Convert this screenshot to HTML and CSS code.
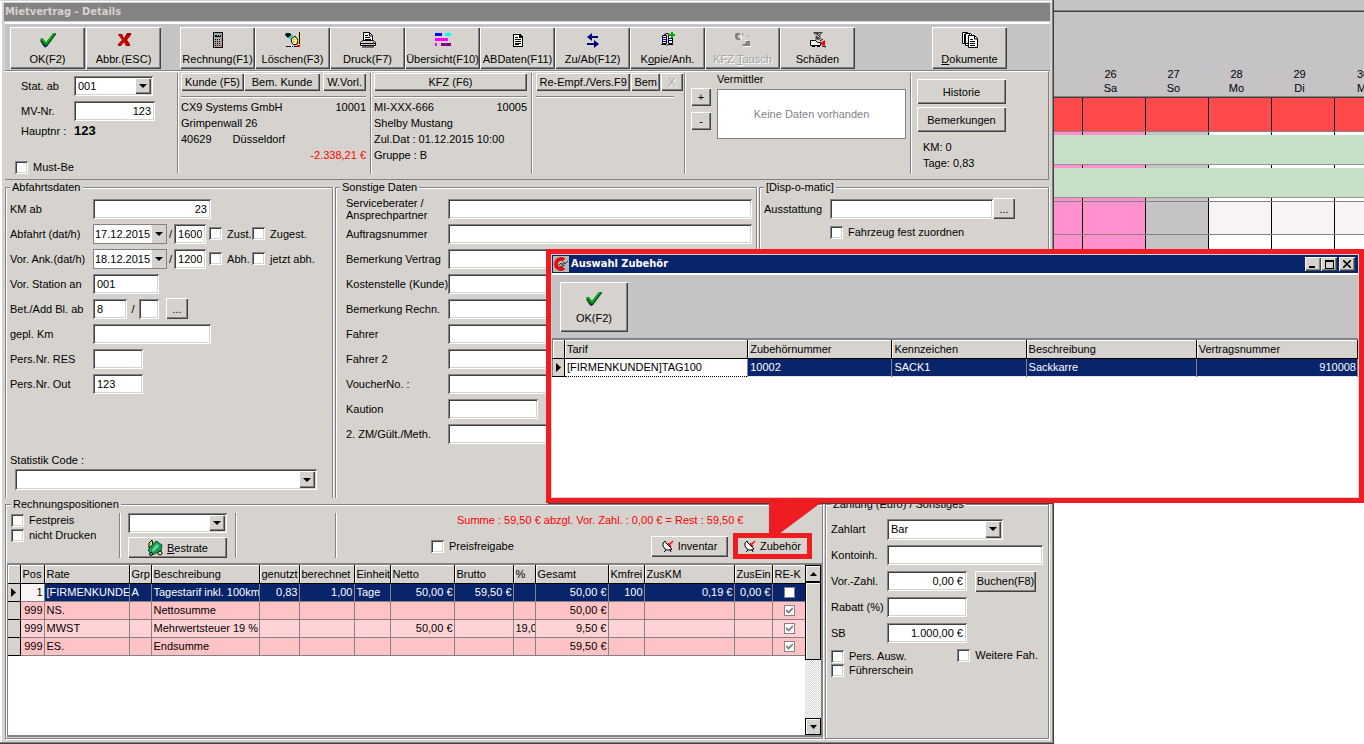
FILE: index.html
```html
<!DOCTYPE html>
<html lang="de">
<head>
<meta charset="utf-8">
<title>Mietvertrag - Details</title>
<link rel="stylesheet" href="styles.css">
</head>
<body>
<svg class="defs" aria-hidden="true">
  <symbol id="i-check" viewBox="0 0 16 15"><path d="M0 8l3-1 3 3 7-9h3v1L7 14l-2 1-2-2z" fill="#00186b"/><path d="M0 6h3l3 4 7-9h3L7 13H5L3 11z" fill="#008a00"/><path d="M2 7l4 4 8-10" fill="none" stroke="#10c310"/></symbol>
  <symbol id="i-arrow" viewBox="0 0 5 9"><path d="M0 0l5 4.500-5 4.500z"/></symbol>
  <symbol id="i-plug" viewBox="0 0 12 12"><path d="M3 1L1 3v3l2 3 2 1h3l2-1-6-6z" fill="#fff" stroke="#000"/><path d="M4 10l-2 2M8 9l1 3" fill="none" stroke="#000"/><path d="M11 1L7 5M6 3l3 4" fill="none" stroke="red" stroke-width="1.300"/></symbol>
</svg>
<div class="desktop">
<main class="window">
  <h1 class="titlebar">Mietvertrag - Details</h1>

  <div class="toolbar">
    <div class="tools">
      <button class="tool"><svg width="16" height="16"><use href="#i-check"/></svg><span>OK(F2)</span></button>
      <button class="tool"><svg width="16" height="16" viewBox="0 0 16 16"><path d="M2 2h4l2 4 3-5h4v2l-4 5 3 4v2h-4l-2-4-3 4H2v-2l4-4-3-4z" fill="#a00000"/><path d="M4 3l7 10M13 3L4 13" fill="none" stroke="#d00" stroke-width="1.500"/></svg><span>Abbr.(ESC)</span></button>
    </div>
    <div class="tools">
      <button class="tool"><svg width="16" height="16" viewBox="0 0 16 16" shape-rendering="crispEdges"><path d="M3 0h10v16H3z"/><path d="M4 1h8v14H4z" fill="#a5a2a5"/><path d="M5 3h6v2H5z" fill="#000"/><path d="M7 3h1v1H7zM9 3h1v1H9z" fill="#0ff"/><path d="M5 7h1v1H5zM7 7h1v1H7zM9 7h1v1H9zM5 9h1v1H5zM7 9h1v1H7zM9 9h1v1H9zM5 11h1v1H5zM7 11h1v1H7zM9 11h1v1H9zM5 13h1v1H5zM7 13h1v1H7z"/><path d="M9 13h2v1H9z" fill="red"/></svg><span>Rechnung(F1)</span></button>
      <button class="tool"><svg width="16" height="16" viewBox="0 0 16 16"><path d="M1 1h4l2 3-4 2-3-3z"/><path d="M4 5l3-3 1 2-4 3-2-1z" fill="#0dd"/><path d="M6 7l4-3 3 4-1 4-3 1-2-2z" fill="#fff7a0" stroke="#000"/><path d="M8 7l2 1M8 9l2 1" stroke="#c90"/><path d="M13 1h1v11h-1z" fill="#fd0"/><path d="M14.500 0v12M1 14.500h5M9 14.500h3M7 14.500h1" stroke="#000"/><path d="M12 13h3v2h-3z" fill="red"/></svg><span>Löschen(F3)</span></button>
      <button class="tool"><svg width="16" height="16" viewBox="0 0 16 16"><path d="M3.500 9V.5h6l3 3V9" fill="#fff" stroke="#000"/><path d="M5 3.500h3M5 5.500h5M9.500 1v3h3M5 7.500h6" stroke="#000" fill="none"/><path d="M2.500 8.500h11l2 2v3H.5v-3z" fill="#d6d3ce" stroke="#000"/><path d="M1 11.500h14M2 15h12" stroke="#000"/><path d="M13 10h1v1h-1z" fill="red"/></svg><span>Druck(F7)</span></button>
      <button class="tool"><svg width="16" height="16" viewBox="0 0 16 16" shape-rendering="crispEdges"><path d="M0 1h7v3H0z" fill="#00f"/><path d="M10 1h6v3h-6z" fill="#0ff"/><path d="M0 6h13v3H0zM0 11h2v3H0z" fill="#f0f"/><path d="M6 11h10v3H6z" fill="#808"/></svg><span>Übersicht(F10)</span></button>
      <button class="tool"><svg width="16" height="16" viewBox="0 0 16 16" shape-rendering="crispEdges"><path d="M3 2h7l3 3v10H3z"/><path d="M4 3h5v3h3v8H4z" fill="#fff"/><path d="M5 5h3v1H5zM5 7h6v1H5zM5 9h6v1H5zM5 11h6v1H5zM5 13h4v-1H5z"/></svg><span>ABDaten(F11)</span></button>
      <button class="tool"><svg width="16" height="16" viewBox="0 0 16 16"><path d="M2 5l5-4v3h6v2H7v3zM14 12l-5-4v3H2v2h7v3z" fill="#000084"/></svg><span>Zu/Ab(F12)</span></button>
      <button class="tool"><svg width="16" height="16" viewBox="0 0 16 16"><path d="M2.500 3.500h4v8h-4zM8.500 3.500h4v8h-4z" fill="#ffd" stroke="#000"/><path d="M3 5.500h3M3 7.500h3M3 9.500h3M9 6.500h3M9 8.500h3" stroke="#00a"/><path d="M4 2.500l3-1 3 1M1 12.500h5l1 1 1-1h5" stroke="#000" fill="none"/><path d="M11 0h2v2h2v2h-2v2h-2V4H9V2h2z" fill="#0a0"/></svg><span>K<u>o</u>pie/Anh.</span></button>
      <button class="tool" disabled><svg width="18" height="16" viewBox="0 0 18 16"><path d="M2 1h4v2H4v3h2v2H3L1 6V2zM8 12h3l1-3h4v5H9zM8 1h1v2H8zM14 4h1v1h-1z" fill="#848284"/><path d="M7 3v3h2M9 14.500h8M11 8.500h2M16.500 5v1" stroke="#fff" fill="none"/></svg><span>KFZ <u>T</u>ausch</span></button>
      <button class="tool"><svg width="18" height="16" viewBox="0 0 18 16"><path d="M4 0h10l-3 3 1 4-3 1-3-1 1-3z" fill="#424142"/><path d="M6 2l5 4M11 1L8 4" stroke="#ccc"/><path d="M1.500 8.500h5l2 2h3v3h-10z" fill="#fff" stroke="#000"/><path d="M3 14h3M8 14h3" stroke="#000" stroke-width="2"/><path d="M11 11l5-3v6l-3-1z" fill="red"/><path d="M11 9l3-2M13 14l4 1" stroke="#000"/></svg><span>Schäden</span></button>
    </div>
    <div class="tools">
      <button class="tool"><svg width="18" height="16" viewBox="0 0 18 16"><path d="M1.500 11.500V.5h5l2 2v9zM4.500 13.500v-12h5l2 2v10z" fill="#fff" stroke="#000"/><path d="M7.500 3.500h6l3 3v9h-9z" fill="#fff" stroke="#000"/><path d="M13.500 4v3h3M9 7.500h3M9 9.500h5M9 11.500h5M9 13.500h5M3.500 2v10" stroke="#000" fill="none"/></svg><span><u>D</u>okumente</span></button>
    </div>
  </div>

  <section class="head">
    <div class="head-col base">
      <div class="line"><label for="stat">Stat. ab</label><span class="combo w-station"><select id="stat"><option>001</option></select></span></div>
      <div class="line"><label for="mv">MV-Nr.</label><input class="field w-mv num" id="mv" value="123"></div>
      <div class="line short"><span class="key">Hauptnr :</span><b>123</b></div>
      <label class="check must"><input type="checkbox">Must-Be</label>
    </div>
    <div class="head-col kunde">
      <div class="btns"><div class="pair"><button class="btn">Kunde (F5)</button><button class="btn wide">Bem. Kunde</button></div><button class="btn">W.Vorl.</button></div>
      <hr>
      <p class="split"><span>CX9 Systems GmbH</span><span>10001</span></p>
      <p>Grimpenwall 26</p>
      <p class="town"><span>40629</span><span>Düsseldorf</span></p>
      <p class="amount">-2.338,21 €</p>
    </div>
    <div class="head-col kfz">
      <div class="btns"><button class="btn full">KFZ (F6)</button></div>
      <hr>
      <p class="split"><span>MI-XXX-666</span><span>10005</span></p>
      <p>Shelby Mustang</p>
      <p>Zul.Dat : 01.12.2015 10:00</p>
      <p>Gruppe : B</p>
    </div>
    <div class="head-col empf">
      <div class="btns tight"><button class="btn grow">Re-Empf./Vers.F9</button><button class="btn">Bem</button><button class="btn x" disabled>X</button></div>
      <hr>
    </div>
    <div class="head-col agent">
      <div class="plusminus"><button class="btn">+</button><button class="btn">-</button></div>
      <div class="agent-list"><span>Vermittler</span><div class="empty">Keine Daten vorhanden</div></div>
    </div>
    <div class="head-col extra">
      <button class="btn">Historie</button>
      <button class="btn">Bemerkungen</button>
      <div class="facts"><p>KM: 0</p><p>Tage: 0,83</p></div>
    </div>
  </section>

  <div class="groups upper">
    <fieldset class="group depart">
      <legend>Abfahrtsdaten</legend>
      <div class="row"><label for="km">KM ab</label><input class="field w-118 num" id="km" value="23"></div>
      <div class="row"><label for="ab">Abfahrt (dat/h)</label><span class="combo flat"><select id="ab"><option>17.12.2015</option></select></span>/<input class="field w-time" aria-label="Abfahrt Uhrzeit" value="1600"><label class="check c1"><input type="checkbox">Zust.</label><label class="check"><input type="checkbox">Zugest.</label></div>
      <div class="row"><label for="an">Vor. Ank.(dat/h)</label><span class="combo flat"><select id="an"><option>18.12.2015</option></select></span>/<input class="field w-time" aria-label="Ankunft Uhrzeit" value="1200"><label class="check c1"><input type="checkbox">Abh.</label><label class="check"><input type="checkbox">jetzt abh.</label></div>
      <div class="row"><label for="st">Vor. Station an</label><input class="field w-66" id="st" value="001"></div>
      <div class="row"><label for="bl">Bet./Add Bl. ab</label><input class="field w-34" id="bl" value="8"><span class="slash">/</span><input class="field w-20" aria-label="Add Bl."><button class="btn dots gap">...</button></div>
      <div class="row"><label for="gk">gepl. Km</label><input class="field w-118" id="gk"></div>
      <div class="row"><label for="pr">Pers.Nr. RES</label><input class="field w-50" id="pr"></div>
      <div class="row"><label for="po">Pers.Nr. Out</label><input class="field w-50" id="po" value="123"></div>
      <div class="stat"><label for="sc">Statistik Code :</label><span class="combo"><select id="sc"><option></option></select></span></div>
    </fieldset>
    <fieldset class="group other">
      <legend>Sonstige Daten</legend>
      <div class="row"><label class="two" for="o1">Serviceberater / Ansprechpartner</label><input class="field grow" id="o1"></div>
      <div class="row"><label for="o2">Auftragsnummer</label><input class="field grow" id="o2"></div>
      <div class="row"><label for="o3">Bemerkung Vertrag</label><input class="field grow" id="o3"></div>
      <div class="row"><label for="o4">Kostenstelle (Kunde)</label><input class="field grow" id="o4"></div>
      <div class="row"><label for="o5">Bemerkung Rechn.</label><input class="field grow" id="o5"></div>
      <div class="row"><label for="o6">Fahrer</label><input class="field grow" id="o6"></div>
      <div class="row"><label for="o7">Fahrer 2</label><input class="field grow" id="o7"></div>
      <div class="row"><label for="o8">VoucherNo. :</label><input class="field grow" id="o8"></div>
      <div class="row"><label for="o9">Kaution</label><input class="field w-90" id="o9"></div>
      <div class="row"><label for="o10">2. ZM/Gült./Meth.</label><input class="field grow" id="o10"></div>
    </fieldset>
    <fieldset class="group dispo">
      <legend>[Disp-o-matic]</legend>
      <div class="row"><label for="eq">Ausstattung</label><input class="field w-equip" id="eq"><button class="btn dots">...</button></div>
      <label class="check fixed"><input type="checkbox">Fahrzeug fest zuordnen</label>
    </fieldset>
  </div>

  <div class="groups lower">
    <fieldset class="group positions">
      <legend>Rechnungspositionen</legend>
      <div class="posbar">
        <div class="cell checks"><label class="check"><input type="checkbox">Festpreis</label><label class="check"><input type="checkbox">nicht Drucken</label></div>
        <div class="cell rates"><span class="combo"><select aria-label="Rate"><option></option></select></span>
          <button class="btn best"><svg width="16" height="16" viewBox="0 0 16 16"><path d="M2 3l3-3 1 5-4 3z" fill="#dd4" stroke="#000"/><path d="M1 10l8-9 6 4-1 6-9 4z" fill="#18a058" stroke="#053"/><path d="M5 10l5-6 2 2-6 6z" fill="#6d9"/><circle cx="13" cy="13" r="2" fill="#ee8" stroke="#000"/><circle cx="4" cy="14" r="1.500" fill="#aaa" stroke="#000"/></svg><span><u>B</u>estrate</span></button></div>
        <div class="cell blank"></div>
        <div class="cell sum">
          <p class="total">Summe : 59,50 € abzgl. Vor. Zahl. : 0,00 € = Rest : 59,50 €</p>
          <div class="actions"><label class="check"><input type="checkbox">Preisfreigabe</label>
            <button class="btn inv"><svg width="12" height="12"><use href="#i-plug"/></svg>Inventar</button>
            <span class="marked"><button class="btn"><svg width="12" height="12"><use href="#i-plug"/></svg>Zubehör</button></span></div>
        </div>
      </div>
      <div class="gridbox">
        <div class="gridarea">
        <table class="grid pos">
          <colgroup><col class="k-ind"><col class="k-pos"><col class="k-rate"><col class="k-grp"><col class="k-desc"><col class="k-used"><col class="k-calc"><col class="k-unit"><col class="k-net"><col class="k-gross"><col class="k-grp"><col class="k-total"><col class="k-unit"><col class="k-km"><col class="k-ein"><col class="k-re"></colgroup>
          <thead><tr><th></th><th>Pos</th><th>Rate</th><th>Grp</th><th>Beschreibung</th><th>genutzt</th><th>berechnet</th><th>Einheit</th><th>Netto</th><th>Brutto</th><th>%</th><th>Gesamt</th><th>Kmfrei</th><th>ZusKM</th><th>ZusEin</th><th>RE-K</th></tr></thead>
          <tbody>
          <tr class="sel"><th><svg width="5" height="9"><use href="#i-arrow"/></svg></th><td class="num cur">1</td><td>[FIRMENKUNDE</td><td>A</td><td>Tagestarif inkl. 100km</td><td class="num">0,83</td><td class="num">1,00</td><td>Tage</td><td class="num">50,00 €</td><td class="num">59,50 €</td><td></td><td class="num">50,00 €</td><td class="num">100</td><td class="num">0,19 €</td><td class="num">0,00 €</td><td class="mid"><input type="checkbox" aria-label="RE-K"></td></tr>
          <tr><th></th><td class="num">999</td><td>NS.</td><td></td><td>Nettosumme</td><td></td><td></td><td></td><td></td><td></td><td></td><td class="num">50,00 €</td><td></td><td></td><td></td><td class="mid"><input type="checkbox" aria-label="RE-K" checked disabled></td></tr>
          <tr class="alt"><th></th><td class="num">999</td><td>MWST</td><td></td><td>Mehrwertsteuer 19 %</td><td></td><td></td><td></td><td class="num">50,00 €</td><td></td><td>19,0</td><td class="num">9,50 €</td><td></td><td></td><td></td><td class="mid"><input type="checkbox" aria-label="RE-K" checked disabled></td></tr>
          <tr><th></th><td class="num">999</td><td>ES.</td><td></td><td>Endsumme</td><td></td><td></td><td></td><td></td><td></td><td></td><td class="num">59,50 €</td><td></td><td></td><td></td><td class="mid"><input type="checkbox" aria-label="RE-K" checked disabled></td></tr>
          </tbody>
        </table>
        </div>
        <div class="scroll"><button class="sb" aria-label="Nach oben"><svg width="7" height="4" viewBox="0 0 7 4"><path d="M0 4l3.500-4L7 4z"/></svg></button><div class="thumb"></div><button class="sb" aria-label="Nach unten"><svg width="7" height="4" viewBox="0 0 7 4"><path d="M0 0l3.500 4L7 0z"/></svg></button></div>
      </div>
    </fieldset>
    <fieldset class="group pay">
      <legend>Zahlung (Euro) / Sonstiges</legend>
      <div class="row"><label for="z1">Zahlart</label><span class="combo w-art"><select id="z1"><option>Bar</option></select></span></div>
      <div class="row"><label for="z2">Kontoinh.</label><input class="field grow" id="z2"></div>
      <div class="row"><label for="z3">Vor.-Zahl.</label><input class="field w-80 num" id="z3" value="0,00 €"><button class="btn book">Buchen(F8)</button></div>
      <div class="row"><label for="z4">Rabatt (%)</label><input class="field w-80" id="z4"></div>
      <div class="row"><label for="z5">SB</label><input class="field w-80 num" id="z5" value="1.000,00 €"></div>
      <div class="paychecks"><div><label class="check"><input type="checkbox">Pers. Ausw.</label><label class="check"><input type="checkbox">Führerschein</label></div><label class="check"><input type="checkbox">Weitere Fah.</label></div>
    </fieldset>
  </div>
</main>

<aside class="calendar">
  <div class="cal-top"></div>
  <div class="days">
    <div class="day"></div><div class="day">26<br>Sa</div><div class="day">27<br>So</div><div class="day">28<br>Mo</div><div class="day">29<br>Di</div><div class="day">30<br>Mi</div>
  </div>
  <div class="cal-row red"><i></i><i></i><i></i><i></i><i></i><i></i></div>
  <div class="cal-row thin"><i></i><i></i><i></i><i></i><i></i><i></i></div>
  <div class="bar"></div>
  <div class="cal-row thin"><i></i><i></i><i></i><i></i><i></i><i></i></div>
  <div class="bar"></div>
  <div class="cal-row thin"><i></i><i></i><i></i><i></i><i></i><i></i></div>
  <div class="cal-row shade"><i></i><i></i><i></i><i></i><i></i><i></i></div>
  <div class="cal-row"><i></i><i></i><i></i><i></i><i></i><i></i></div>
</aside>

<section class="dialog" aria-label="Auswahl Zubehör">
  <div class="dialog-in">
    <div class="dlg-title">
      <svg width="16" height="16" viewBox="0 0 16 16"><path d="M0 0h16v16H0z" fill="#b8b8b8"/><path d="M11 4A5 5 0 1 0 11 12" fill="none" stroke="#e01010" stroke-width="4"/><path d="M6 9l2-2 1 2 2-3 1 2 3-3M7 11l5-2" stroke="#333" fill="none"/></svg>
      <h2>Auswahl Zubehör</h2>
      <div class="winbtns">
        <button class="btn" aria-label="Minimieren"><svg width="8" height="8" viewBox="0 0 8 8"><path d="M0 6h6v2H0z"/></svg></button>
        <button class="btn" aria-label="Maximieren"><svg width="9" height="9" viewBox="0 0 9 9" shape-rendering="crispEdges"><path d="M0 0h9v9H0zM1 2v6h7V2z" fill-rule="evenodd"/></svg></button>
        <button class="btn close" aria-label="Schließen"><svg width="8" height="8" viewBox="0 0 8 8"><path d="M0 0l8 8M8 0L0 8" stroke="#000" stroke-width="1.600"/></svg></button>
      </div>
    </div>
    <div class="dlg-tools"><button class="tool big"><svg width="16" height="15"><use href="#i-check"/></svg><span>OK(F2)</span></button></div>
    <table class="grid acc">
      <colgroup><col class="k-ind"><col class="a-tarif"><col class="a-nr"><col class="a-kz"><col class="a-be"><col class="a-vn"></colgroup>
      <thead><tr><th></th><th>Tarif</th><th>Zubehörnummer</th><th>Kennzeichen</th><th>Beschreibung</th><th>Vertragsnummer</th></tr></thead>
      <tbody><tr class="sel"><th><svg width="5" height="9"><use href="#i-arrow"/></svg></th><td class="cur">[FIRMENKUNDEN]TAG100</td><td>10002</td><td>SACK1</td><td>Sackkarre</td><td class="num">910008</td></tr></tbody>
    </table>
  </div>
  <svg class="callout" width="53" height="32" viewBox="0 0 53 32"><path d="M0 0h53L10 32H0z" fill="#ef1c21"/></svg>
</section>
</div>
</body>
</html>
```

FILE: styles.css
```css
* { box-sizing: border-box; }
:root {
  --face: #d6d3ce;
  --tool: #c6c3c6;
  --mid: #848284;
  --dark: #424142;
  --navy: #08246b;
  --red: #ef1c21;
  --raised: inset 1px 1px #fff, inset -1px -1px var(--dark), inset -2px -2px var(--mid);
  --sunken: inset 1px 1px var(--mid), inset -1px -1px #fff, inset 2px 2px var(--dark), inset -2px -2px var(--face);
}
body { margin: 0; background: #fff; color: #000; font: 11px/14px "Liberation Sans", Arial, sans-serif; }
button, input, select { font: inherit; color: inherit; margin: 0; border: 0; border-radius: 0; padding: 0; }
p, h1, h2 { margin: 0; }
.defs { position: absolute; width: 0; height: 0; }
svg { flex: none; display: block; }
.desktop { position: relative; display: flex; align-items: flex-start; min-height: 100vh; overflow: hidden; }

/* main window */
.window {
  flex: 1; min-width: 0; min-height: calc(100vh - 1px); display: flex; flex-direction: column;
  padding: 3px 4px 4px; background: var(--face);
  box-shadow: inset -1px -1px var(--dark), inset -2px -2px var(--mid), inset 0 1px var(--face), inset 2px 2px #fff;
}
.titlebar { height: 18px; margin: 0 0 1px; padding-left: 1px; background: var(--mid); color: var(--face); font: bold 11px/18px "DejaVu Sans Condensed", "DejaVu Sans", sans-serif; }
.btn, .tool { background: var(--face); box-shadow: var(--raised); white-space: nowrap; }
.btn { display: inline-flex; align-items: center; justify-content: center; height: 19px; padding: 0 4px; }
.btn:disabled { color: #a5a2a5; text-shadow: 1px 1px #fff; }
.toolbar { display: flex; gap: 19px; height: 49px; padding: 3px 43px 0 5px; background: var(--tool); border-top: 2px solid #fff; border-bottom: 1px solid var(--mid); margin-left: 1px; }
.tools { display: flex; }
.tools:last-child { margin-left: auto; }
.tool { display: flex; flex-direction: column; align-items: center; gap: 4px; width: 75px; height: 42px; padding-top: 5px; }
.tool:disabled { color: #a5a2a5; text-shadow: 1px 1px #fff; }
.tools:first-child { gap: 1px; }

.field { height: 20px; min-width: 0; padding: 0 4px; background: #fff; box-shadow: var(--sunken); }
.num { text-align: right; }
.combo { position: relative; display: inline-flex; height: 21px; padding: 2px; background: #fff; box-shadow: var(--sunken); }
.combo select { appearance: none; flex: 1; min-width: 0; background: transparent; padding: 0 2px; }
.combo::after {
  content: ""; position: absolute; top: 2px; right: 2px; bottom: 2px; width: 16px; pointer-events: none;
  box-shadow: var(--raised);
  background: var(--face) url("data:image/svg+xml,%3Csvg xmlns='http://www.w3.org/2000/svg' width='8' height='4'%3E%3Cpath d='M0 0h8L4 4z'/%3E%3C/svg%3E") center no-repeat;
}
.combo.flat { width: 74px; height: 20px; padding: 1px; box-shadow: inset 0 0 0 1px var(--mid); }
.combo.flat select { padding: 0 1px; }
.combo.flat::after { box-shadow: none; width: 14px; top: 1px; right: 1px; bottom: 1px; }
.check { display: inline-flex; align-items: center; gap: 5px; white-space: nowrap; }
input[type="checkbox"] { appearance: none; flex: none; width: 13px; height: 13px; background: #fff; box-shadow: var(--sunken); }
.grow { flex: 1; }

/* header panel */
.head { display: flex; height: 109px; margin: 0 1px 0 1px; padding-top: 1px; border-top: 1px solid #fff; border-bottom: 1px solid var(--mid); border-right: 1px solid var(--mid); }
.head-col { padding: 0 4px; margin-bottom: 5px; }
.head-col + .head-col { border-left: 1px solid var(--mid); box-shadow: inset 1px 0 #fff; }
.head-col p { line-height: 16px; }
.head-col .btns .btn { height: 18px; }
.head hr { margin: 5px 0 1px; height: 2px; border: 0; border-top: 1px solid var(--mid); background: #fff; }
.base { width: 172px; padding-left: 10px; }
.line { display: flex; align-items: center; height: 25px; padding-left: 6px; }
.line label, .line .key { width: 53px; }
.line.short { height: 16px; }
.line b { font-size: 13px; }
.w-station { width: 79px; height: 20px; }
.w-mv { width: 81px; }
.must { margin-top: 21px; }
.kunde { width: 193px; padding-left: 3px; }
.btns { display: flex; justify-content: space-between; }
.btns.tight { gap: 1px; }
.btns.tight .btn { padding: 0 3px; }
.btns.tight .x { width: 22px; }
.pair { display: flex; }
.wide { width: 76px; }
.full { flex: 1; }
.split, .town { display: flex; justify-content: space-between; }
.town { justify-content: flex-start; gap: 21px; }
.amount { text-align: right; color: red; }
.kfz { width: 161px; padding-left: 3px; }
.empf { width: 153px; }
.empf .btns { margin-right: -3px; }
.empf hr { margin-right: 6px; }
.agent { flex: 1; display: flex; gap: 6px; padding: 0 4px 0 6px; }
.plusminus { display: flex; flex-direction: column; gap: 6px; padding-top: 15px; }
.plusminus .btn { width: 20px; height: 18px; }
.agent-list { flex: 1; margin-top: -1px; }
.empty { height: 50px; background: #fff; border: 1px solid var(--mid); color: var(--mid); display: flex; align-items: center; justify-content: center; margin-top: 3px; }
.extra { width: 138px; padding: 6px 42px 0 6px; display: flex; flex-direction: column; gap: 3px; }
.extra .btn { height: 25px; }
.facts { padding: 4px 0 0 6px; }

/* group boxes */
.groups { display: grid; gap: 2px; margin: 0 1px 0 1px; }
.upper { grid-template-columns: 328px 422px minmax(0, 1fr); margin-top: 1px; min-height: 317px; }
.group { min-width: 0; margin: 0; padding: 3px 4px 0; border: 1px solid var(--mid); box-shadow: inset 1px 1px #fff, 1px 0 #fff; }
.upper .group { border-bottom: 0; }
legend { padding: 0 2px; background: var(--face); line-height: 12px; }
.row { display: flex; align-items: center; height: 25px; }
.row > label:first-child { flex: none; width: 83px; white-space: nowrap; }
.other { padding-left: 7px; padding-right: 4px; }
.other legend { margin-left: -3px; }
.other .row > label:first-child { width: 105px; padding-left: 3px; margin-left: 0; }
.other .row > label.two { white-space: normal; line-height: 12px; }
.w-118 { width: 118px; } .w-66 { width: 66px; } .w-50 { width: 50px; } .w-34 { width: 34px; } .w-20 { width: 20px; } .w-90 { width: 90px; } .w-80 { width: 80px; }
.w-time { width: 32px; margin: 0 3px 0 2px; }
.combo.flat { margin-right: 2px; }
.c1 { width: 43px; }
.slash { width: 12px; text-align: center; }
.dots { width: 22px; height: 21px; }
.dots.gap { margin-left: 7px; }
.stat { display: flex; flex-direction: column; gap: 2px; margin-top: 57px; padding-right: 11px; }
.stat .combo { margin-left: 5px; }
.dispo .row > label:first-child { width: 66px; }
.w-equip { flex: 0 1 163px; }
.fixed { margin: 4px 0 0 66px; }

.lower { flex: 1; grid-template-columns: 818px minmax(0, 1fr); }
.lower .group { margin-bottom: 1px; box-shadow: inset 1px 1px #fff, 1px 1px #fff; }
.positions { display: flex; flex-direction: column; padding: 1px 0 1px 1px; }
.positions legend { margin-left: 4px; }
.posbar { display: flex; height: 52px; }
.cell { margin: 2px 0 5px; }
.cell + .cell { border-left: 1px solid var(--mid); box-shadow: inset 1px 0 #fff; }
.checks { width: 112px; padding-left: 4px; display: flex; flex-direction: column; gap: 1px; }
.rates { width: 116px; padding: 0 8px; display: flex; flex-direction: column; gap: 4px; }
.rates .combo { height: 20px; }
.best { height: 21px; gap: 4px; }
.blank { width: 100px; }
.sum { flex: 1; display: flex; flex-direction: column; padding: 0 10px 0 95px; }
.total { color: red; margin-left: 26px; }
.actions { display: flex; align-items: center; margin-top: 6px; }
.inv { margin-left: auto; width: 77px; height: 21px; gap: 4px; }
.marked { margin-left: 5px; padding: 5px; background: var(--red); }
.marked .btn { width: 69px; height: 16px; gap: 4px; box-shadow: none; display: flex; }
.gridbox { flex: 1; display: flex; min-height: 174px; background: #fff; border: 2px solid var(--mid); border-left-width: 1px; border-right-width: 1px; }
.gridarea { flex: 1; min-width: 0; }
.grid { width: 100%; border-collapse: collapse; table-layout: fixed; }
.grid th, .grid td { height: 18px; padding: 0 2px; overflow: hidden; white-space: nowrap; text-align: left; font-weight: normal; border: 1px solid var(--mid); line-height: 16px; }
.grid th { background: var(--face); border-color: #000; }
.grid tr > :first-child { border-left: 0; }
.grid thead th { border-top: 0; box-shadow: inset 1px 1px #fff; }
.grid tbody th { padding: 0 3px; }
.grid td { background: #ffc3c6; }
.grid .alt td { background: #ffd3d6; }
.grid .sel td { background: var(--navy); color: #fff; }
.grid .sel td.cur { background: #f7f3f7; color: #000; }
.grid td.num { text-align: right; padding-right: 1px; }
.grid td.mid { text-align: center; }
.mid input[type="checkbox"] { display: block; margin: 0 auto; width: 11px; height: 11px; box-shadow: inset 0 0 0 1px var(--mid); }
.mid input:checked { background: #fff url("data:image/svg+xml,%3Csvg xmlns='http://www.w3.org/2000/svg' width='7' height='7'%3E%3Cpath d='M0 3l2.500 2.500L7 1' fill='none' stroke='%23848284' stroke-width='1.800'/%3E%3C/svg%3E") center no-repeat; }
.k-ind { width: 12px; } .k-pos { width: 24px; } .k-rate { width: 85px; } .k-grp { width: 22px; } .k-desc { width: 108px; } .k-used { width: 40px; } .k-calc { width: 55px; } .k-unit { width: 36px; } .k-net { width: 64px; } .k-gross { width: 59px; } .k-total { width: 73px; } .k-km { width: 90px; } .k-ein { width: 38px; } .k-re { width: 34px; }
.scroll { width: 16px; display: flex; flex-direction: column; background: repeating-conic-gradient(var(--face) 0 25%, #fff 0 50%) 0 0 / 2px 2px; }
.sb { height: 17px; background: var(--face); border: 1px solid #000; display: flex; align-items: center; justify-content: center; box-shadow: inset 1px 1px #fff; }
.sb:last-child { margin-top: auto; }
.thumb { height: 78px; background: var(--face); border: 1px solid #000; box-shadow: inset 1px 1px #fff; }

.pay { padding: 6px 5px 0 5px; }
.pay .row { height: 26px; }
.pay .row > label:first-child { width: 56px; }
.w-art { width: 116px; }
.book { margin-left: 8px; width: 61px; height: 21px; padding: 0; }
.paychecks { display: flex; justify-content: space-between; align-items: flex-start; padding: 2px 5px 0 0; }
.paychecks > div { display: flex; flex-direction: column; margin-top: 1px; }

/* day planner behind the windows */
.calendar { flex: none; width: 310px; }
.cal-top { height: 12px; background: var(--tool); border-bottom: 1px solid var(--dark); box-shadow: inset 0 -1px var(--mid); }
.days, .cal-row { display: grid; grid-template-columns: 28px repeat(4, 63px) minmax(0, 1fr); overflow: hidden; }
.days { height: 86px; padding-top: 55px; background: var(--tool); border-bottom: 1px solid var(--dark); box-shadow: inset 0 -1px var(--mid); }
.day { text-align: center; padding-right: 6px; }
.day:last-child { padding: 0 0 0 23px; text-align: left; }
.cal-row i { border-left: 1px solid #000; background: #fff; }
.cal-row i:first-child { border-left: 0; }
.cal-row i:nth-child(-n+2) { background: #ff92ce; }
.cal-row i:nth-child(3) { background: var(--tool); }
.cal-row { height: 34px; border-bottom: 1px solid var(--mid); }
.cal-row.red i { background: #ff494a; }
.cal-row.thin { height: 3px; border-bottom: 0; }
.cal-row.shade i:nth-child(n+4) { background: #f7f3f7; }
.cal-row.shade { border-top: 1px solid var(--mid); }
.bar { height: 30px; background: #c6dfc6; border-bottom: 1px solid #949294; }

/* accessory dialog */
.dialog { position: absolute; left: 546px; right: 0; top: 249px; height: 254px; padding: 5px; background: var(--red); }
.dialog::after { content: ""; position: absolute; left: 2px; top: 100%; width: 505px; height: 1px; background: var(--dark); }
.dialog-in { height: 100%; display: flex; flex-direction: column; border: 1px solid var(--face); background: #fff; }
.dlg-title { display: flex; align-items: center; gap: 2px; height: 18px; padding: 0 3px 0 1px; background: var(--navy); color: #fff; }
.dlg-title h2 { flex: 1; font: bold 11px/18px "DejaVu Sans Condensed", "DejaVu Sans", sans-serif; }
.winbtns { display: flex; }
.winbtns .btn { width: 16px; height: 14px; padding: 0; }
.winbtns .close { margin-left: 2px; }
.dlg-tools { height: 67px; padding: 7px 8px; background: var(--tool); border-top: 2px solid #fff; border-bottom: 2px solid var(--mid); }
.tool.big { width: 68px; height: 50px; padding-top: 9px; gap: 5px; }
.acc { border-left: 1px solid var(--mid); }
.acc td { border-top: 1px dotted #d6d3ce; border-bottom: 1px dotted #d6d3ce; }
.acc .sel td.cur { background: #fff; border: 1px dotted #000; }
.a-tarif { width: 183px; } .a-nr { width: 144px; } .a-kz { width: 134px; } .a-be { width: 170px; } .a-vn { width: 161px; }
.callout { position: absolute; left: 223px; top: 253px; z-index: 1; }
```
